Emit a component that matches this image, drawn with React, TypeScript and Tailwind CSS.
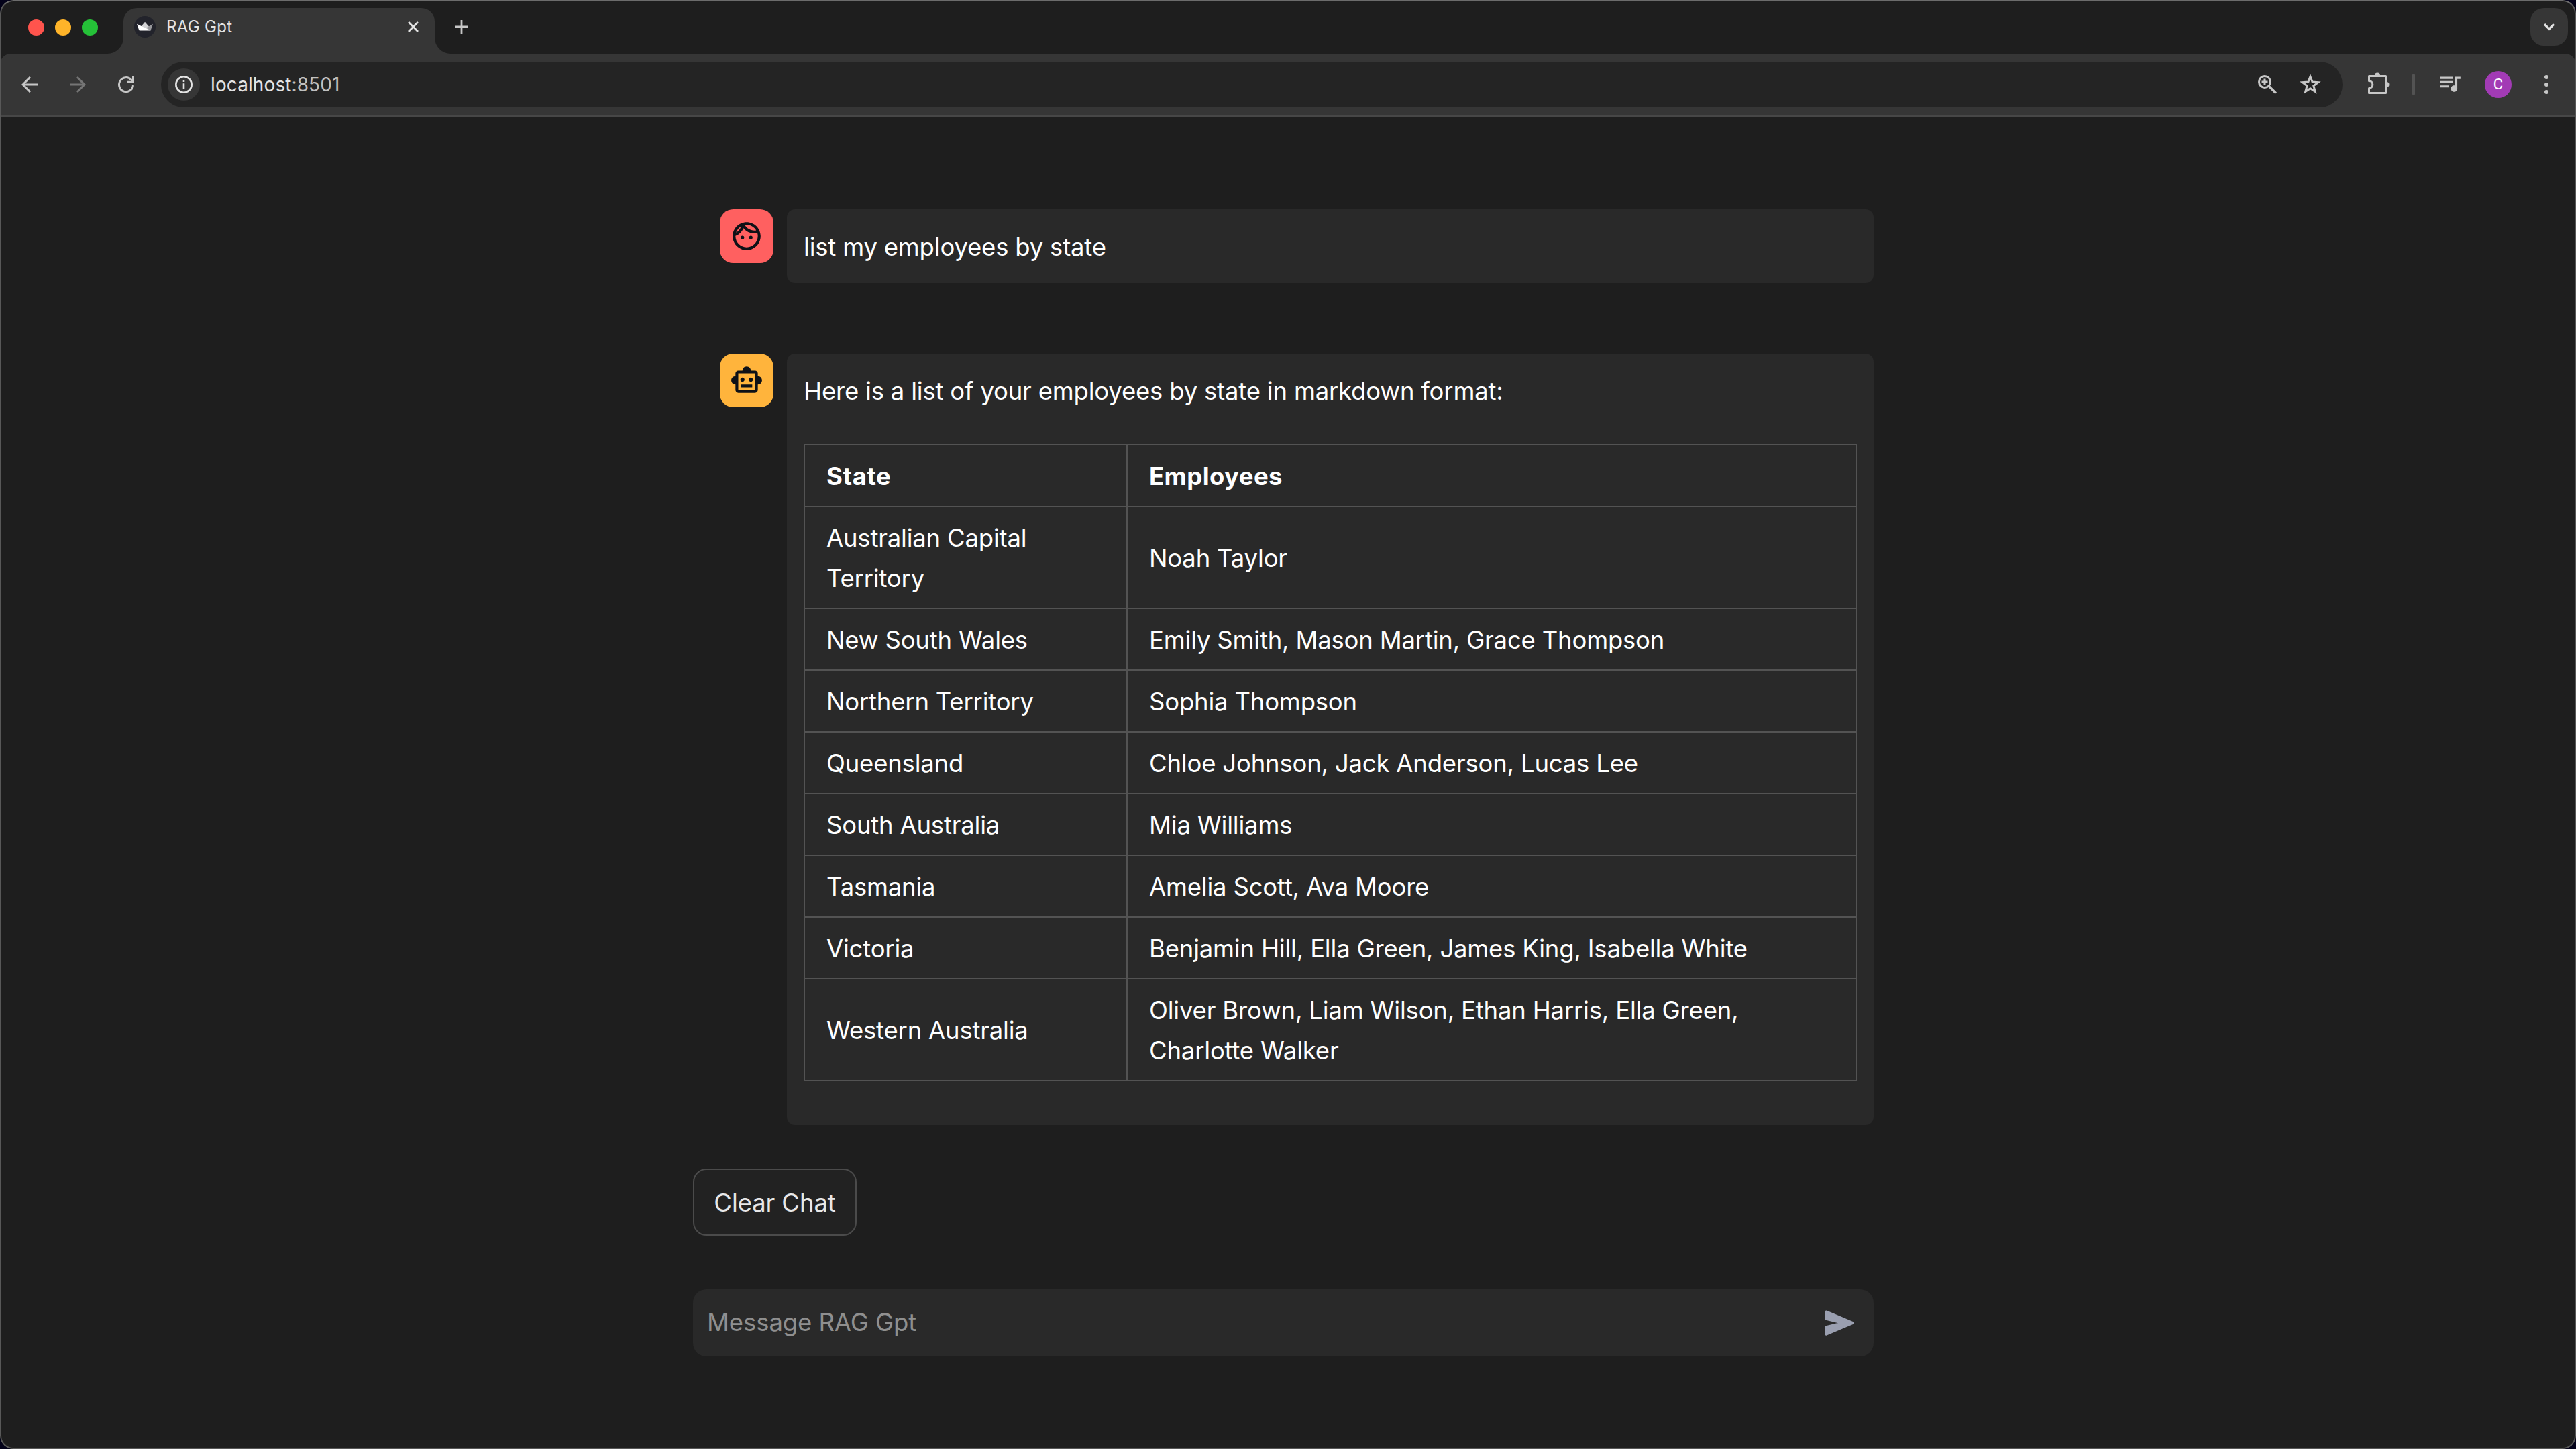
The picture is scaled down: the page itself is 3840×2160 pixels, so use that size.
import React from 'react';
import { MdOutlineFace, MdOutlineSmartToy, MdQueueMusic } from 'react-icons/md';

type Row = { state: string; employees: string };

const rows: Row[] = [
  { state: 'Australian Capital Territory', employees: 'Noah Taylor' },
  { state: 'New South Wales', employees: 'Emily Smith, Mason Martin, Grace Thompson' },
  { state: 'Northern Territory', employees: 'Sophia Thompson' },
  { state: 'Queensland', employees: 'Chloe Johnson, Jack Anderson, Lucas Lee' },
  { state: 'South Australia', employees: 'Mia Williams' },
  { state: 'Tasmania', employees: 'Amelia Scott, Ava Moore' },
  { state: 'Victoria', employees: 'Benjamin Hill, Ella Green, James King, Isabella White' },
  { state: 'Western Australia', employees: 'Oliver Brown, Liam Wilson, Ethan Harris, Ella Green, Charlotte Walker' },
];

function Favicon() {
  return (
    <svg width="32" height="32" viewBox="0 0 32 32">
      <circle cx="16" cy="16" r="16" fill="#22232b" />
      <path d="M16 8.7L9.5 16.5L24.5 21.5L22 15.4Z" fill="#d2d2d4" />
      <path d="M28 11.7L18 17.5L24.5 21.5Z" fill="#98989c" />
      <path d="M4 11.7L24.5 21.5H8.2Q7.4 21.5 7.2 20.8Z" fill="#fff" />
    </svg>
  );
}

function TabStrip() {
  return (
    <div className="flex h-20 items-start">
      <div className="flex gap-4 pl-[42px] pt-[29px]">
        <span className="size-6 rounded-full bg-[#ff544d]" />
        <span className="size-6 rounded-full bg-[#ffb429]" />
        <span className="size-6 rounded-full bg-[#25c138]" />
      </div>

      {/* Active tab with its flared feet */}
      <div className="ml-[14px] flex h-20 items-end">
        <svg width="24" height="24" viewBox="0 0 24 24" fill="#363636">
          <path d="M24 0V24H0A24 24 0 0 0 24 0Z" />
        </svg>
        <div className="h-[68px] w-[464px] rounded-t-[20px] bg-[#363636]">
          <div className="flex h-14 items-center pl-4 pr-6">
            <Favicon />
            <span className="ml-4 flex-1 text-[24px] leading-none tracking-[0.3px] text-[#e3e3e3]">RAG Gpt</span>
            <svg width="16" height="16" viewBox="0 0 16 16" stroke="#e3e3e3" strokeWidth="2.8">
              <path d="M1 1L15 15M15 1L1 15" />
            </svg>
          </div>
        </div>
        <svg width="24" height="24" viewBox="0 0 24 24" fill="#363636">
          <path d="M0 0V24H24A24 24 0 0 1 0 0Z" />
        </svg>
      </div>

      <svg className="ml-1.5 mt-[30px]" width="20" height="20" viewBox="0 0 20 20" stroke="#c7c7c7" strokeWidth="2.8">
        <path d="M10 0V20M0 10H20" />
      </svg>

      <button className="ml-auto mr-3 mt-3 flex size-14 items-center justify-center rounded-[20px] bg-[#363636]">
        <svg width="16" height="11" viewBox="0 0 16 11" fill="none" stroke="#e3e3e3" strokeWidth="3.2">
          <path d="M1 1.2L8 8.2L15 1.2" />
        </svg>
      </button>
    </div>
  );
}

function Toolbar() {
  return (
    <div className="flex h-[94px] items-center rounded-t-[16px] border-b-2 border-[#474747] bg-[#363636] pl-8 pr-[41px]">
      <svg width="24" height="24" viewBox="0 0 24 24" fill="none" stroke="#c7c7c7" strokeWidth="3">
        <path d="M24 12H2M13 1L2 12L13 23" />
      </svg>
      <svg className="ml-12" width="24" height="24" viewBox="0 0 24 24" fill="none" stroke="#757575" strokeWidth="3">
        <path d="M0 12H22M11 1L22 12L11 23" />
      </svg>
      <svg className="ml-12" width="24" height="24" viewBox="0 0 24 24" fill="none" stroke="#c7c7c7" strokeWidth="3">
        <path d="M22.5 13A10.5 10.5 0 1 1 19.5 4.7L22 8" />
        <path d="M22.5 0V8.2H13.7" />
      </svg>

      {/* Address bar */}
      <div className="ml-10 flex h-[68px] flex-1 items-center rounded-full bg-[#242424] pl-2.5 pr-8">
        <span className="flex size-12 items-center justify-center rounded-full bg-[#363636]">
          <svg width="26" height="26" viewBox="0 0 26 26" fill="none" stroke="#e3e3e3" strokeWidth="2.6">
            <circle cx="13" cy="13" r="11.7" />
            <path d="M13 11.2V19.4M13 6.4V9" />
          </svg>
        </span>
        <span className="ml-4 flex-1 text-[28px] leading-none tracking-[0.1px] text-[#e3e3e3]">
          localhost<span className="text-[#c0c0c0]">:8501</span>
        </span>
        <svg width="28" height="28" viewBox="0 0 28 28" fill="none" stroke="#c7c7c7" strokeWidth="3">
          <circle cx="10" cy="10" r="8.5" />
          <path d="M10 5.5V14.5M5.5 10H14.5" />
          <path d="M16 16L26.8 26.8" strokeWidth="3.4" />
        </svg>
        <svg className="ml-[34px]" width="32" height="32" viewBox="0 0 32 32" fill="none" stroke="#c7c7c7" strokeWidth="3" strokeMiterlimit="10">
          <path d="M16 4.2L19.1 12.1L27.7 12.7L20.9 17.9L23.2 26.3L16 21.7L8.8 26.3L11.1 17.9L4.3 12.7L12.9 12.1Z" />
        </svg>
      </div>

      <svg className="ml-[38px]" width="32" height="36" viewBox="0 0 32 36" fill="none" stroke="#c7c7c7" strokeWidth="3" strokeLinejoin="round">
        <path d="M1.5 12.6V5.5H26.5V30.5H1.5V23.4A5.4 5.4 0 0 0 1.5 12.6Z" />
        <path d="M10 4.5A4 4 0 0 1 18 4.5ZM27.5 14A4 4 0 0 1 27.5 22Z" fill="#c7c7c7" stroke="none" />
      </svg>
      <span className="ml-[34px] h-8 w-1 rounded-full bg-[#535353]" />
      <MdQueueMusic className="mb-[5px] ml-[33px] size-[38px] text-[#c7c7c7]" />
      <span className="ml-[33px] flex size-10 items-center justify-center rounded-full bg-[#a23bb5] font-['Roboto',sans-serif] text-[22px] leading-none text-white">
        C
      </span>
      <svg className="ml-[49px]" width="6" height="28" viewBox="0 0 6 28" fill="#c7c7c7">
        <circle cx="3" cy="3" r="3" />
        <circle cx="3" cy="14" r="3" />
        <circle cx="3" cy="25" r="3" />
      </svg>
    </div>
  );
}

function EmployeeTable() {
  return (
    <table className="mt-[49px] w-[1570px] table-fixed border-collapse">
      <thead>
        <tr>
          <th className="w-[481px] border-2 border-[#535353] px-8 pt-4 pb-[14px] text-left font-bold tracking-[0.6px]">State</th>
          <th className="border-2 border-[#535353] px-8 pt-4 pb-[14px] text-left font-bold tracking-[0.4px]">Employees</th>
        </tr>
      </thead>
      <tbody>
        {rows.map((row) => (
          <tr key={row.state}>
            <td className="border-2 border-[#535353] px-8 pt-4 pb-[14px] align-middle">{row.state}</td>
            <td className="border-2 border-[#535353] px-8 pt-4 pb-[14px] align-middle">{row.employees}</td>
          </tr>
        ))}
      </tbody>
    </table>
  );
}

export default function App() {
  return (
    <div className="h-[2160px] w-[3840px] overflow-hidden bg-[#03021a] font-['Inter',sans-serif]">
      <div className="relative flex h-full flex-col overflow-hidden rounded-[20px] bg-[#1e1e1e]">
        <TabStrip />
        <Toolbar />

        <main className="ml-[1033px] w-[1760px] pt-[138px] text-[36.5px] leading-[60px] tracking-[-0.2px] text-white">
          {/* User message */}
          <div className="flex gap-5 pl-10">
            <div className="flex size-20 shrink-0 items-center justify-center rounded-[20px] bg-[#ff6060] text-[#0e1117]">
              <MdOutlineFace className="size-[50px]" />
            </div>
            <div className="flex-1 rounded-[12px] bg-[#292929] px-[25px] pt-[26px] pb-6">list my employees by state</div>
          </div>

          {/* Assistant message */}
          <div className="mt-[105px] flex gap-5 pl-10">
            <div className="flex size-20 shrink-0 items-center justify-center rounded-[20px] bg-[#ffb43c] text-[#0e1117]">
              <MdOutlineSmartToy className="size-[50px]" />
            </div>
            <div className="flex-1 rounded-[12px] bg-[#292929] px-[25px] pb-[65px] pt-[26px]">
              <p>Here is a list of your employees by state in markdown format:</p>
              <EmployeeTable />
            </div>
          </div>

          <button className="mt-[65px] flex h-[100px] w-[244px] items-center justify-center rounded-[20px] border-2 border-[#4b4b4b] bg-[#222222] pt-0.5 tracking-[-0.1px] text-[#e8e8e8]">
            Clear Chat
          </button>

          <div className="mt-20 flex h-[100px] items-center justify-between rounded-[20px] bg-[#292929] pl-[21px] pr-[29px]">
            <span className="pb-0.5 tracking-[-0.1px] text-[#8f8f8f]">Message RAG Gpt</span>
            <svg width="44" height="38" viewBox="0 0 44 38" fill="#9a9fb0" stroke="#9a9fb0" strokeWidth="4" strokeLinejoin="round">
              <path d="M2.3 2.4L42 19L2.3 35.6V25.2L28 19L2.3 12.8Z" />
            </svg>
          </div>
        </main>

        {/* Window outline */}
        <div className="pointer-events-none absolute inset-0 rounded-[20px] border-2 border-[#585858] border-t-[#6c6c6c]" />
      </div>
    </div>
  );
}
